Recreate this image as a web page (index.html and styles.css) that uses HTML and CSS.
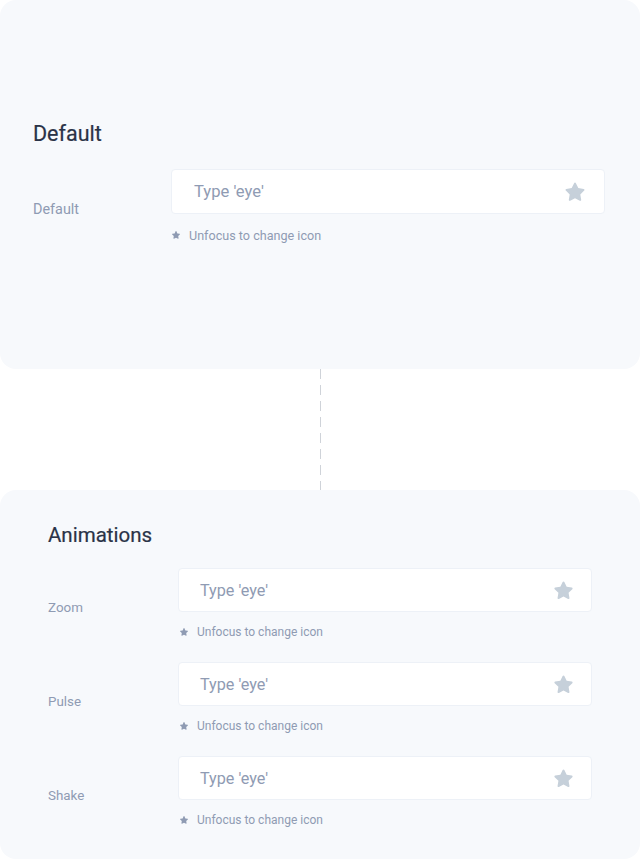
FILE: index.html
```html
<!DOCTYPE html>
<html lang="en">
<head>
<meta charset="utf-8">
<title>Icon input</title>
<link rel="stylesheet" href="styles.css">
</head>
<body>
<svg width="0" height="0" class="defs" aria-hidden="true">
  <defs>
    <symbol id="star" viewBox="0 0 24 24">
      <path d="M12 2.6c.4 0 .7.2.9.6l2.4 4.9 5.4.8c.8.1 1.1 1.1.5 1.7l-3.9 3.8.9 5.4c.1.8-.7 1.4-1.4 1l-4.8-2.5-4.8 2.5c-.7.4-1.5-.2-1.4-1l.9-5.4-3.9-3.8c-.6-.6-.3-1.6.5-1.7l5.4-.8 2.4-4.9c.2-.4.5-.6.9-.6z"/>
    </symbol>
  </defs>
</svg>

<section class="card card-default">
  <h2 class="card-title">Default</h2>
  <div class="row">
    <div class="label">Default</div>
    <div class="field">
      <div class="input">
        <span class="placeholder">Type 'eye'</span>
        <svg class="input-star"><use href="#star"/></svg>
      </div>
      <div class="hint"><svg class="hint-star"><use href="#star"/></svg><span>Unfocus to change icon</span></div>
    </div>
  </div>
</section>

<div class="connector"></div>

<section class="card card-anim">
  <h2 class="card-title">Animations</h2>
  <div class="rows">
    <div class="row">
      <div class="label">Zoom</div>
      <div class="field">
        <div class="input">
          <span class="placeholder">Type 'eye'</span>
          <svg class="input-star"><use href="#star"/></svg>
        </div>
        <div class="hint"><svg class="hint-star"><use href="#star"/></svg><span>Unfocus to change icon</span></div>
      </div>
    </div>
    <div class="row">
      <div class="label">Pulse</div>
      <div class="field">
        <div class="input">
          <span class="placeholder">Type 'eye'</span>
          <svg class="input-star"><use href="#star"/></svg>
        </div>
        <div class="hint"><svg class="hint-star"><use href="#star"/></svg><span>Unfocus to change icon</span></div>
      </div>
    </div>
    <div class="row">
      <div class="label">Shake</div>
      <div class="field">
        <div class="input">
          <span class="placeholder">Type 'eye'</span>
          <svg class="input-star"><use href="#star"/></svg>
        </div>
        <div class="hint"><svg class="hint-star"><use href="#star"/></svg><span>Unfocus to change icon</span></div>
      </div>
    </div>
  </div>
</section>
</body>
</html>
```

FILE: styles.css
```css
* { box-sizing: border-box; }

html, body {
  margin: 0;
  padding: 0;
  background: #ffffff;
  font-family: Roboto, "Liberation Sans", sans-serif;
}

.defs { position: absolute; width: 0; height: 0; overflow: hidden; }

.card {
  background: #f7f9fc;
  border-radius: 16px;
  display: flex;
  flex-direction: column;
}

.card-default {
  height: 369px;
  padding: 122px 35px 0 33px;
}

.card-anim {
  height: 369px;
  padding: 33px 48px 0 48px;
}

.card-title {
  margin: 0;
  font-size: 21.5px;
  line-height: 24px;
  font-weight: 400;
  color: #2a3347;
  -webkit-text-stroke: 0.2px #2a3347;
}

.card-default .card-title { margin-bottom: 23px; }
.card-anim .card-title { margin-bottom: 21px; font-size: 20.5px; }

.rows {
  display: flex;
  flex-direction: column;
  gap: 22px;
}

.row {
  display: flex;
  align-items: center;
}

.label {
  flex: none;
  font-size: 14.4px;
  color: #8f9bb3;
  padding-top: 6px;
}

.card-default .label { width: 138px; }
.card-anim .label { width: 130px; font-size: 13.4px; }

.field {
  flex: 1;
  display: flex;
  flex-direction: column;
}

.input {
  height: 45px;
  background: #ffffff;
  border: 1px solid #edf1f7;
  border-radius: 4px;
  display: flex;
  align-items: center;
  justify-content: space-between;
  padding: 0 17px 0 22px;
}

.card-anim .input { height: 44px; padding: 0 16px 0 21px; }

.placeholder {
  font-size: 16.6px;
  color: #8f9bb3;
}

.card-anim .placeholder { font-size: 16.2px; }

.input-star {
  width: 24px;
  height: 24px;
  fill: #c6d0da;
}

.card-anim .input-star { width: 23px; height: 23px; }

.hint {
  display: flex;
  align-items: center;
  gap: 8px;
  margin-top: 13px;
  height: 16px;
  font-size: 12.6px;
  color: #8f9bb3;
}

.card-anim .hint { margin-top: 12px; gap: 8px; font-size: 12px; padding-left: 1px; }

.hint-star {
  width: 10px;
  height: 10px;
  fill: #8f9bb3;
}

.connector {
  height: 121px;
  width: 1px;
  margin-left: 320px;
  background: repeating-linear-gradient(to bottom, #cfd3d9 0 10px, transparent 10px 16px);
}
```
